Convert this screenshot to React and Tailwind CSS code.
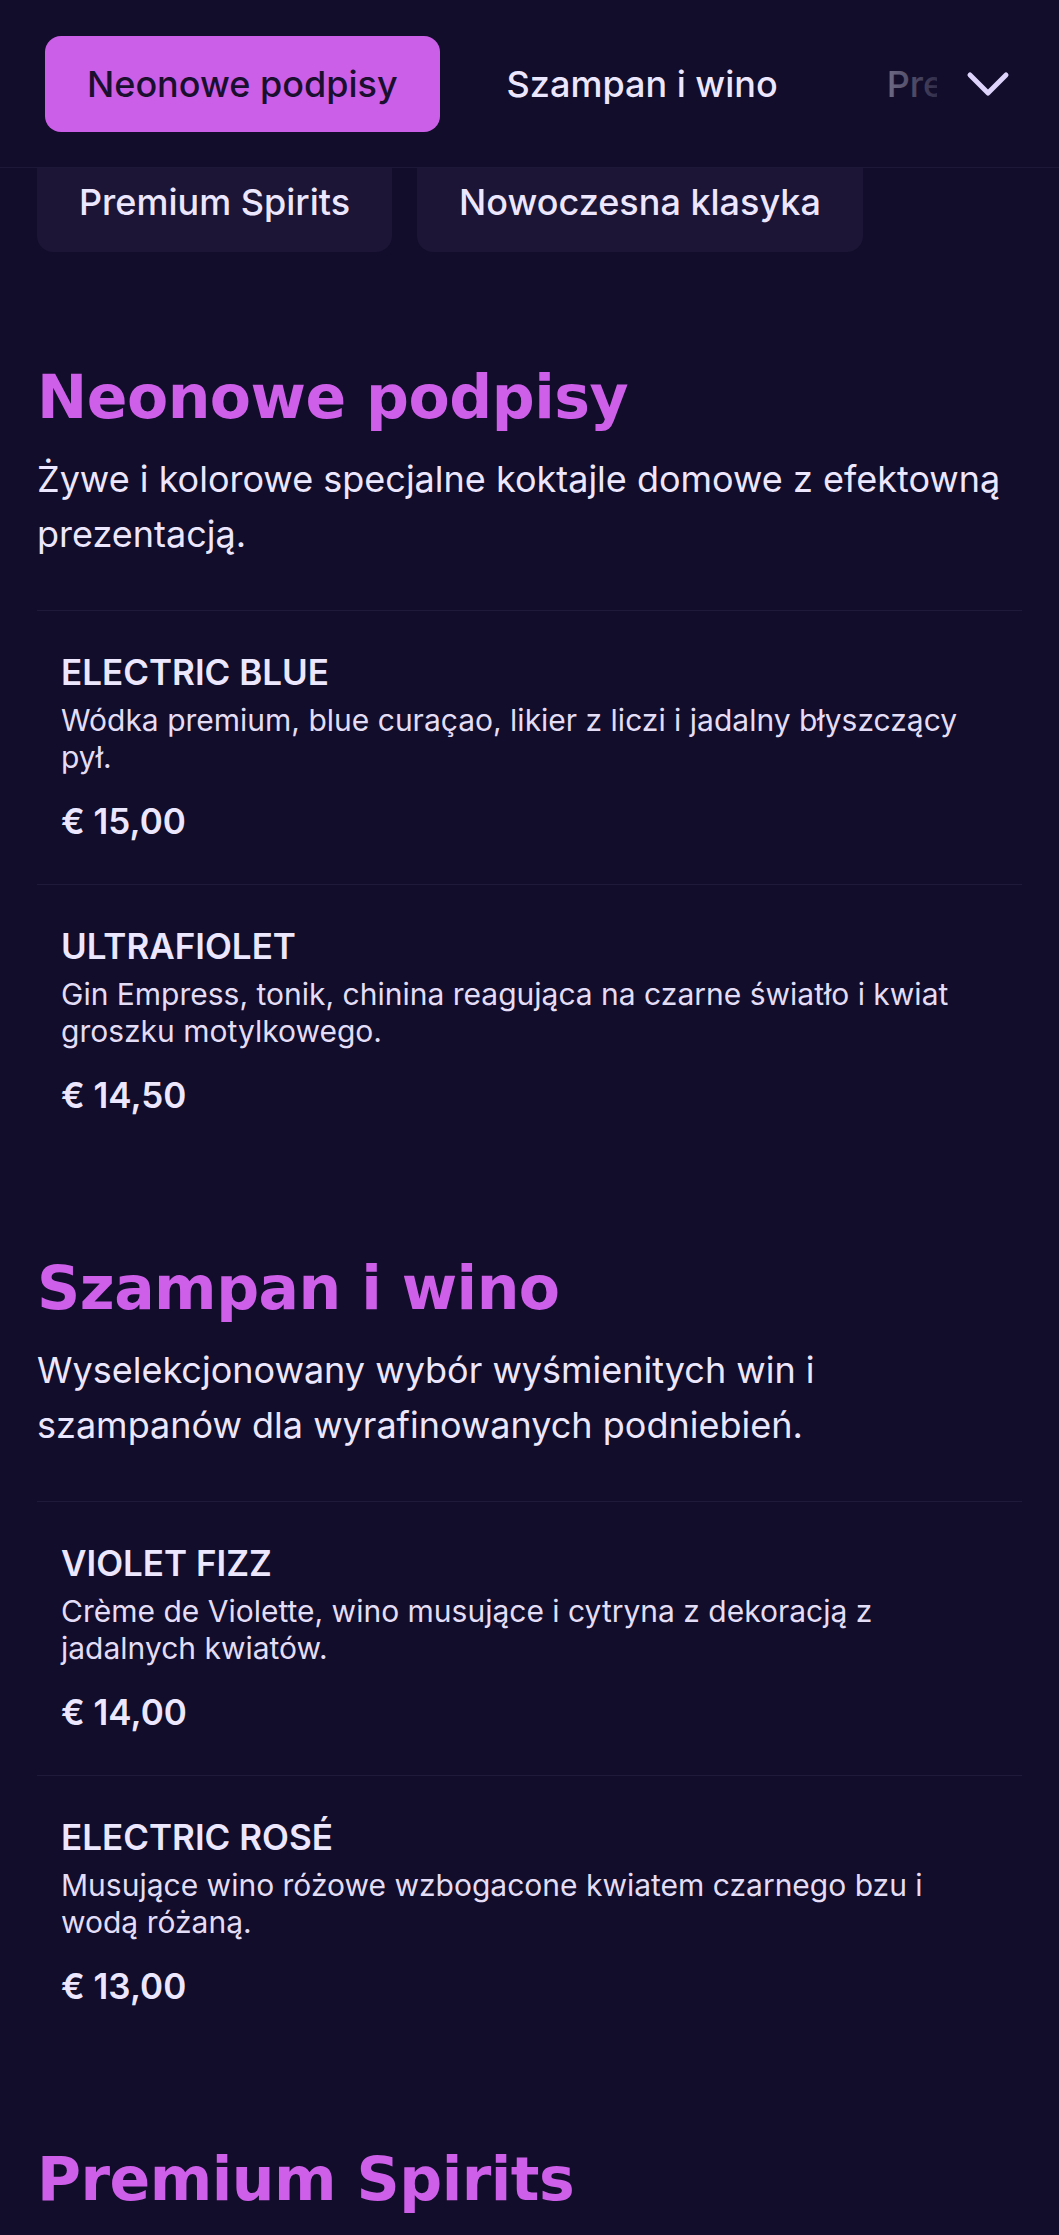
const tabs = ["Neonowe podpisy", "Szampan i wino", "Premium Spirits", "Nowoczesna klasyka"];

const sections = [
  {
    title: "Neonowe podpisy",
    desc: "Żywe i kolorowe specjalne koktajle domowe z efektowną prezentacją.",
    items: [
      {
        name: "ELECTRIC BLUE",
        desc: "Wódka premium, blue curaçao, likier z liczi i jadalny błyszczący pył.",
        price: "€ 15,00",
      },
      {
        name: "ULTRAFIOLET",
        desc: "Gin Empress, tonik, chinina reagująca na czarne światło i kwiat groszku motylkowego.",
        price: "€ 14,50",
      },
    ],
  },
  {
    title: "Szampan i wino",
    desc: "Wyselekcjonowany wybór wyśmienitych win i szampanów dla wyrafinowanych podniebień.",
    items: [
      {
        name: "VIOLET FIZZ",
        desc: "Crème de Violette, wino musujące i cytryna z dekoracją z jadalnych kwiatów.",
        price: "€ 14,00",
      },
      {
        name: "ELECTRIC ROSÉ",
        desc: "Musujące wino różowe wzbogacone kwiatem czarnego bzu i wodą różaną.",
        price: "€ 13,00",
      },
    ],
  },
  {
    title: "Premium Spirits",
    desc: "",
    items: [],
  },
];

function MenuItem({ item }) {
  return (
    <div className="border-t border-[#1f1a3a] px-[24px] pt-[40px] pb-[41px]">
      <p className="text-[35px] leading-[42px] font-semibold text-[#ede6ff]">{item.name}</p>
      <p className="mt-[9px] text-[30px] leading-[37px] text-[#e4ddf7]">{item.desc}</p>
      <p className="mt-[23px] text-[35px] leading-[44px] font-semibold text-[#ede6ff]">{item.price}</p>
    </div>
  );
}

export default function App() {
  return (
    <div className="min-h-screen bg-[#110d2a] font-['Inter',sans-serif] text-[#ede6ff] overflow-hidden">
      <div className="relative z-10 h-[168px] bg-[#110d2a] border-b border-[#1d1838] flex items-center">
        <div className="relative flex-1 h-full overflow-hidden">
          <div className="flex h-full items-center gap-[25px] pl-[45px]">
            {tabs.slice(0, 3).map((t, i) => (
              <button
                key={t}
                className={
                  i === 0
                    ? "shrink-0 h-[96px] px-[42px] rounded-[16px] bg-[#cc5fe7] text-[#1a0f2e] text-[36px] font-medium whitespace-nowrap"
                    : "shrink-0 h-[96px] px-[42px] rounded-[16px] text-[#ede6ff] text-[36px] font-medium whitespace-nowrap"
                }
              >
                {t}
              </button>
            ))}
          </div>
          <div className="absolute right-0 top-0 bottom-0 w-[82px] bg-gradient-to-r from-[#110d2a]/40 to-[#110d2a]/85" />
        </div>
        <div className="w-[122px] h-full flex items-center justify-center pr-[20px]">
          <svg width="44" height="26" viewBox="0 0 44 26" fill="none">
            <path d="M4 4L22 22L40 4" stroke="#ddd3fb" strokeWidth="5" strokeLinecap="round" strokeLinejoin="round" />
          </svg>
        </div>
      </div>

      <div className="-mt-[16px] flex gap-[25px] px-[37px] pb-[62px]">
        {tabs.slice(2).map((t) => (
          <div
            key={t}
            className="h-[100px] px-[42px] rounded-[16px] bg-[#1c1535] flex items-center text-[36px] font-medium text-[#ede6ff] whitespace-nowrap"
          >
            {t}
          </div>
        ))}
      </div>

      <div className="px-[37px]">
        {sections.map((s) => (
          <section key={s.title} className="py-[47px]">
            <h2 className="font-['DejaVu_Sans',sans-serif] text-[60px] leading-[72px] font-bold tracking-[-0.5px] text-[#cd5fe8]">
              {s.title}
            </h2>
            {s.desc && <p className="mt-[19px] text-[36px] leading-[55px] text-[#ede6ff]">{s.desc}</p>}
            {s.items.length > 0 && (
              <div className="mt-[48px]">
                {s.items.map((it) => (
                  <MenuItem key={it.name} item={it} />
                ))}
              </div>
            )}
          </section>
        ))}
      </div>
    </div>
  );
}
